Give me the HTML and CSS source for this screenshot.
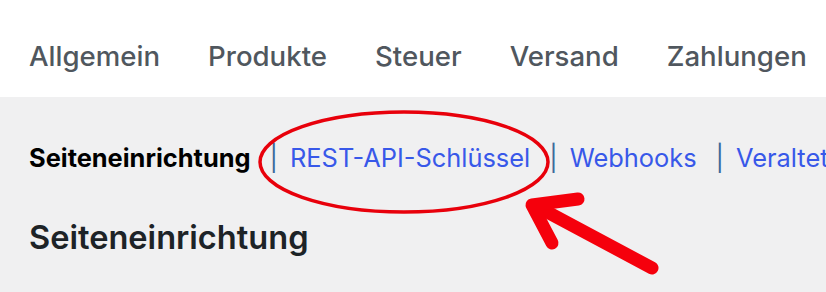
FILE: index.html
```html
<!DOCTYPE html>
<html lang="de">
<head>
    <meta charset="UTF-8">
    <title>WooCommerce - Einstellungen</title>
    <link rel="stylesheet" href="styles.css">
</head>
<body>
    <div class="tabs">
        <a href="#">Allgemein</a>
        <a href="#">Produkte</a>
        <a href="#">Steuer</a>
        <a href="#">Versand</a>
        <a href="#">Zahlungen</a>
    </div>

    <div class="content">
        <ul class="subsubsub">
            <li><a href="#" class="current">Seiteneinrichtung</a><span class="sep">|</span></li>
            <li><a href="#">REST-API-Schlüssel</a><span class="sep">|</span></li>
            <li><a href="#">Webhooks</a><span class="sep">|</span></li>
            <li><a href="#">Veraltete API</a></li>
        </ul>
        <h2>Seiteneinrichtung</h2>

        <svg class="mark" width="826" height="195" viewBox="0 97 826 195">
            <ellipse cx="404" cy="162" rx="144" ry="50" fill="none" stroke="#e8000b" stroke-width="3.5"/>
            <g stroke="#f5000c" stroke-width="13" stroke-linecap="round" stroke-linejoin="round" fill="none">
                <line x1="652" y1="268" x2="536" y2="206"/>
                <polyline points="578,199 532,205 552,243"/>
            </g>
        </svg>
    </div>
</body>
</html>
```

FILE: styles.css
```css
body {
    margin: 0;
    padding: 0;
    font-family: Inter, "Noto Sans", Arial, sans-serif;
    background-color: #f0f0f1;
    overflow: hidden;
}
.tabs {
    background-color: white;
    height: 97px;
    display: flex;
    align-items: center;
    gap: 48px;
    padding: 14px 29px 0;
    box-sizing: border-box;
}
.tabs a {
    color: #50575e;
    text-decoration: none;
    font-size: 27.6px;
    font-weight: 500;
}
.content {
    position: relative;
    height: 195px;
    padding: 0 29px;
    overflow: hidden;
}
.subsubsub {
    list-style: none;
    margin: 0;
    padding: 45px 0 0;
    display: flex;
    white-space: nowrap;
    font-size: 25.4px;
}
.subsubsub a {
    color: #3858e9;
    text-decoration: none;
}
.subsubsub a.current {
    color: #000;
    font-weight: 650;
}
.sep {
    color: #3d6a9c;
    margin: 0 12px 0 19px;
}
h2 {
    margin: 44px 0 0;
    font-size: 32.6px;
    font-weight: 600;
    color: #1d2327;
}
.mark {
    position: absolute;
    left: 0;
    top: 0;
}
```
